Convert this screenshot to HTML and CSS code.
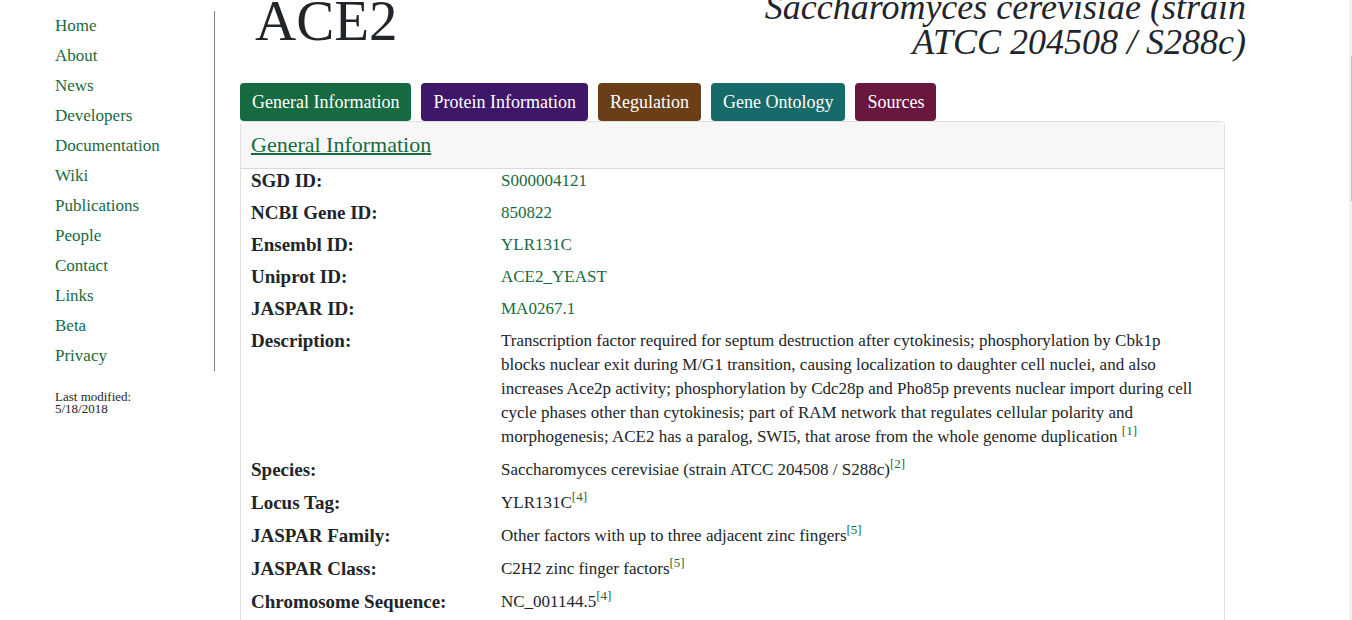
FILE: index.html
```html
<!DOCTYPE html>
<html lang="en">
<head>
<meta charset="utf-8">
<title>ACE2</title>
<link rel="stylesheet" href="styles.css">
</head>
<body>
<div class="page">
  <aside class="sidebar">
    <nav class="menu">
      <a href="#">Home</a>
      <a href="#">About</a>
      <a href="#">News</a>
      <a href="#">Developers</a>
      <a href="#">Documentation</a>
      <a href="#">Wiki</a>
      <a href="#">Publications</a>
      <a href="#">People</a>
      <a href="#">Contact</a>
      <a href="#">Links</a>
      <a href="#">Beta</a>
      <a href="#">Privacy</a>
    </nav>
    <p class="modified">Last modified:<br>5/18/2018</p>
  </aside>
  <main class="main">
    <header class="heading">
      <h1 class="gene">ACE2</h1>
      <h2 class="species">Saccharomyces cerevisiae (strain ATCC 204508 / S288c)</h2>
    </header>
    <div class="tabs">
      <button class="tab general" type="button">General Information</button>
      <button class="tab protein" type="button">Protein Information</button>
      <button class="tab regulation" type="button">Regulation</button>
      <button class="tab ontology" type="button">Gene Ontology</button>
      <button class="tab sources" type="button">Sources</button>
    </div>
    <section class="card">
      <h3 class="card-title"><a href="#">General Information</a></h3>
      <dl class="facts">
        <dt>SGD ID:</dt><dd><a href="#">S000004121</a></dd>
        <dt>NCBI Gene ID:</dt><dd><a href="#">850822</a></dd>
        <dt>Ensembl ID:</dt><dd><a href="#">YLR131C</a></dd>
        <dt>Uniprot ID:</dt><dd><a href="#">ACE2_YEAST</a></dd>
        <dt>JASPAR ID:</dt><dd><a href="#">MA0267.1</a></dd>
        <dt>Description:</dt><dd class="cited">Transcription factor required for septum destruction after cytokinesis; phosphorylation by Cbk1p blocks nuclear exit during M/G1 transition, causing localization to daughter cell nuclei, and also increases Ace2p activity; phosphorylation by Cdc28p and Pho85p prevents nuclear import during cell cycle phases other than cytokinesis; part of RAM network that regulates cellular polarity and morphogenesis; ACE2 has a paralog, SWI5, that arose from the whole genome duplication <sup><a href="#">[1]</a></sup></dd>
        <dt>Species:</dt><dd class="cited">Saccharomyces cerevisiae (strain ATCC 204508 / S288c)<sup><a href="#">[2]</a></sup></dd>
        <dt>Locus Tag:</dt><dd class="cited">YLR131C<sup><a href="#">[4]</a></sup></dd>
        <dt>JASPAR Family:</dt><dd class="cited">Other factors with up to three adjacent zinc fingers<sup><a href="#">[5]</a></sup></dd>
        <dt>JASPAR Class:</dt><dd class="cited">C2H2 zinc finger factors<sup><a href="#">[5]</a></sup></dd>
        <dt>Chromosome Sequence:</dt><dd class="cited">NC_001144.5<sup><a href="#">[4]</a></sup></dd>
      </dl>
    </section>
  </main>
</div>
<div class="scroll-track"><div class="scroll-thumb"></div></div>
</body>
</html>
```
FILE: styles.css
```css
* { box-sizing: border-box; }

body {
  margin: 0;
  height: 100vh;
  overflow: hidden;
  background: #fff;
  color: #212529;
  font-family: "Liberation Serif", serif;
  font-size: 17px;
  line-height: 24px;
}

a { color: #176a3f; text-decoration: none; }

.page { display: flex; gap: 25px; padding-right: 9.4%; }

.sidebar { flex: 0 0 215px; padding: 11px 0 0 55px; }

.menu {
  display: flex;
  flex-direction: column;
  border-right: 1px solid #808080;
  line-height: 30px;
}

.modified { margin: 20px 0 0; font-size: 13px; line-height: 12px; }

.main { flex: 1; min-width: 0; }

/* The page is scrolled, so the heading starts above the window. */
.heading {
  display: flex;
  justify-content: space-between;
  margin: -10px -21px 0 15px;
  height: 93px;
}

.gene { margin: 0; font-size: 57px; font-weight: 400; line-height: 62px; }

.species {
  flex: 0 0 500px;
  margin: 0;
  text-align: right;
  font-size: 36px;
  font-style: italic;
  font-weight: 400;
  line-height: 35px;
}

.tabs { display: flex; gap: 10px; }

.tab {
  padding: 7px 12px;
  border: 0;
  border-radius: 4px;
  color: #fff;
  font-family: inherit;
  font-size: 18px;
  line-height: 24px;
}

.general { background: #176a3f; }
.protein { background: #3f176a; }
.regulation { background: #6a3f17; }
.ontology { background: #176a6a; }
.sources { background: #6a173f; }

.card { border: 1px solid #dfdfdf; border-radius: 4px; }

.card-title {
  margin: 0;
  padding: 11px 10px;
  border-bottom: 1px solid #d8d8d8;
  background: #f7f7f7;
  font-size: 22px;
  font-weight: 400;
  line-height: 24px;
}

.card-title a { text-decoration: underline; text-decoration-thickness: 2px; }

.facts {
  display: grid;
  grid-template-columns: 250px 1fr;
  margin: 0;
  padding: 0 24px 0 10px;
}

.facts dt { font-size: 19px; font-weight: 700; }
.facts dd { margin: 0; padding-bottom: 8px; }
.facts .cited { padding-bottom: 9px; }

sup { font-size: 13px; line-height: 0; }

.scroll-track {
  position: fixed;
  top: 0;
  right: 0;
  bottom: 0;
  width: 3px;
  padding: 56px 0 0 2px;
  background: #f1f1f1;
}

.scroll-thumb { height: 145px; background: #c1c1c1; }
```
